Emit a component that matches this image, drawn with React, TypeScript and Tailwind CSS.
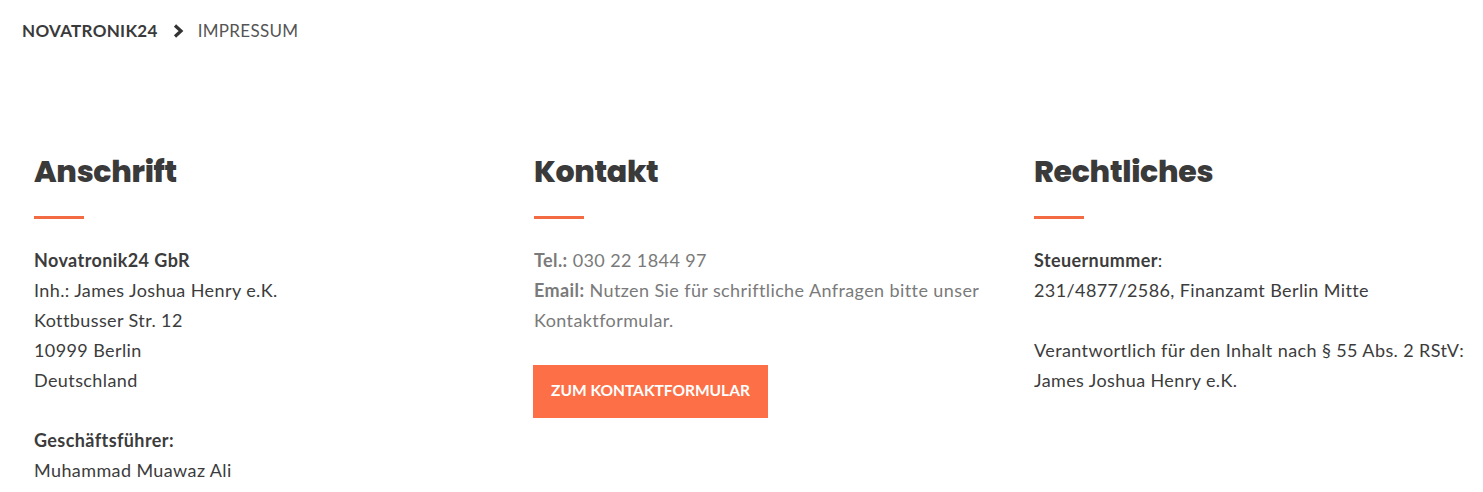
export default function App() {
  const body = "text-[18px] leading-[30px] tracking-[0.4px]"
  return (
    <div className="min-h-screen bg-white" style={{ fontFamily: "'Source Sans Pro', Lato, 'Noto Sans', sans-serif" }}>
      {/* Breadcrumb */}
      <div className="flex items-center px-[22px] pt-[18px] text-[17px] tracking-[0.3px] text-[#3a3a3a]">
        <span className="font-bold">NOVATRONIK24</span>
        <svg width="12" height="14" viewBox="0 0 12 14" className="ml-[14px] mr-[14px]">
          <path d="M3 1.5 L9 7 L3 12.5" fill="none" stroke="#333" strokeWidth="3.2" />
        </svg>
        <span className="text-[#555]">IMPRESSUM</span>
      </div>

      <div className="flex pl-[34px] pt-[108px]">
        {/* Anschrift */}
        <div className="w-[500px] shrink-0">
          <Heading>Anschrift</Heading>
          <div className={`${body} text-[#3c3c3c]`}>
            <p className="font-bold">Novatronik24 GbR</p>
            <p>Inh.: James Joshua Henry e.K.</p>
            <p>Kottbusser Str. 12</p>
            <p>10999 Berlin</p>
            <p>Deutschland</p>
            <p className="mt-[30px] font-bold">Geschäftsführer:</p>
            <p>Muhammad Muawaz Ali</p>
          </div>
        </div>

        {/* Kontakt */}
        <div className="w-[500px] shrink-0">
          <Heading>Kontakt</Heading>
          <div className={`${body} text-[#7a7a7a]`}>
            <p><span className="font-bold">Tel.:</span> 030 22 1844 97</p>
            <p><span className="font-bold">Email:</span> Nutzen Sie für schriftliche Anfragen bitte unser<br />Kontaktformular.</p>
          </div>
          <button className="mt-[30px] -ml-px h-[53px] w-[235px] bg-[#fd7047] text-[15.5px] font-bold uppercase text-white">
            Zum Kontaktformular
          </button>
        </div>

        {/* Rechtliches */}
        <div className="w-[450px] shrink-0">
          <Heading>Rechtliches</Heading>
          <div className={`${body} text-[#3c3c3c]`}>
            <p><span className="font-bold">Steuernummer</span>:</p>
            <p>231/4877/2586, Finanzamt Berlin Mitte</p>
            <p className="mt-[30px]">Verantwortlich für den Inhalt nach § 55 Abs. 2 RStV:</p>
            <p>James Joshua Henry e.K.</p>
          </div>
        </div>
      </div>
    </div>
  )
}

function Heading({ children }: { children: React.ReactNode }) {
  return (
    <div className="mb-[26px]">
      <h2 className="text-[30px] font-extrabold leading-[40px] tracking-[-0.3px] text-[#3a3a3a]" style={{ fontFamily: "Poppins, Inter, sans-serif" }}>
        {children}
      </h2>
      <div className="mt-[24px] h-[3px] w-[50px] bg-[#f26b43]" />
    </div>
  )
}
